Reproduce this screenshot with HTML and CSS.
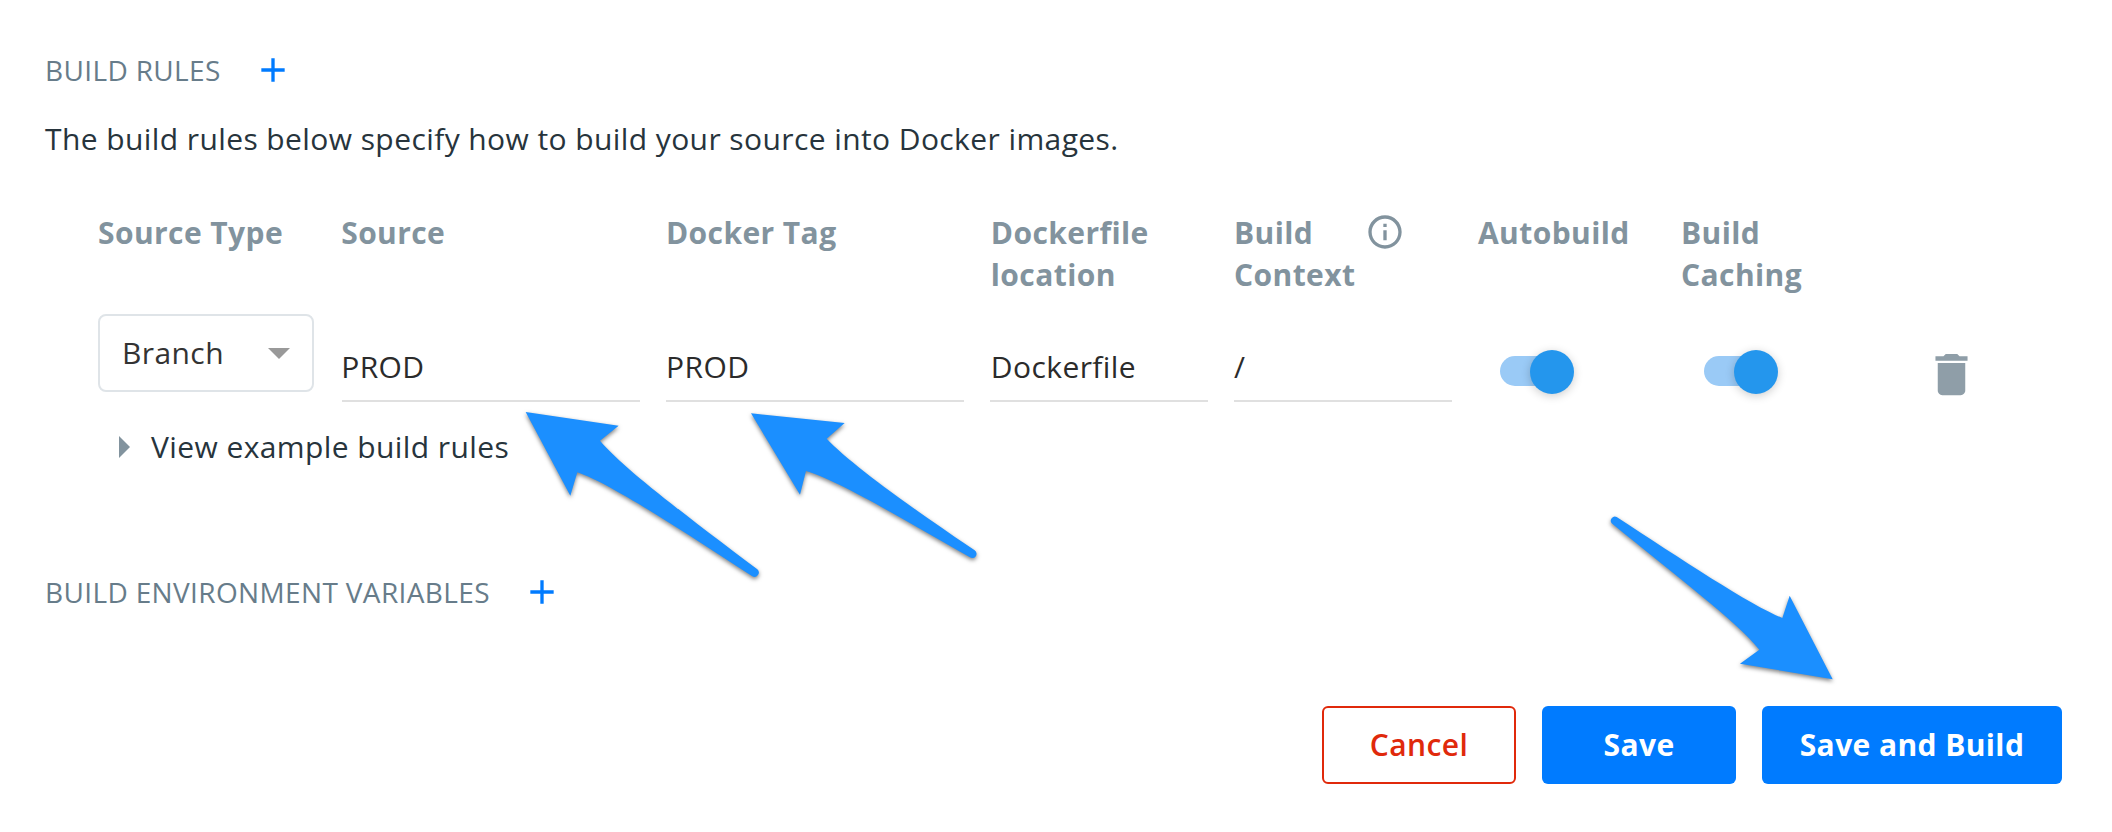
FILE: index.html
```html
<!DOCTYPE html>
<html lang="en">
<head>
<meta charset="utf-8">
<title>Build Rules</title>
<link rel="stylesheet" href="styles.css">
</head>
<body>
<main class="page">
  <header class="section-head">
    <h2 class="section-title">BUILD RULES</h2>
    <svg class="plus" viewBox="0 0 24 24"><path d="M19 13h-6v6h-2v-6H5v-2h6V5h2v6h6v2z"/></svg>
  </header>
  <p class="intro">The build rules below specify how to build your source into Docker images.</p>

  <section class="rules">
    <div class="row labels">
      <div>Source Type</div>
      <div>Source</div>
      <div>Docker Tag</div>
      <div>Dockerfile<br>location</div>
      <div class="with-info">
        <span>Build<br>Context</span>
        <svg class="info" viewBox="0 0 24 24"><path d="M11 7h2v2h-2zm0 4h2v6h-2zm1-9C6.48 2 2 6.48 2 12s4.48 10 10 10 10-4.48 10-10S17.52 2 12 2zm0 18c-4.41 0-8-3.59-8-8s3.59-8 8-8 8 3.59 8 8-3.59 8-8 8z"/></svg>
      </div>
      <div>Autobuild</div>
      <div>Build<br>Caching</div>
    </div>
    <div class="row values">
      <div class="select"><span>Branch</span><svg class="caret" viewBox="0 0 22 11"><path d="M0 0h22L11 11z"/></svg></div>
      <div class="field">PROD</div>
      <div class="field">PROD</div>
      <div class="field">Dockerfile</div>
      <div class="field">/</div>
      <div class="switch"><span class="thumb"></span></div>
      <div class="switch caching"><span class="thumb"></span></div>
      <svg class="trash" viewBox="0 0 24 24"><path d="M6 19c0 1.100.9 2 2 2h8c1.100 0 2-.9 2-2V7H6v12zM19 4h-3.500l-1-1h-5l-1 1H5v2h14V4z"/></svg>
    </div>
    <div class="example">
      <svg class="disclosure" viewBox="0 0 11 22"><path d="M0 0l11 11L0 22z"/></svg>
      <span>View example build rules</span>
    </div>
  </section>

  <header class="section-head env">
    <h2 class="section-title">BUILD ENVIRONMENT VARIABLES</h2>
    <svg class="plus" viewBox="0 0 24 24"><path d="M19 13h-6v6h-2v-6H5v-2h6V5h2v6h6v2z"/></svg>
  </header>

  <footer class="actions">
    <button class="btn cancel">Cancel</button>
    <button class="btn primary">Save</button>
    <button class="btn primary wide">Save and Build</button>
  </footer>

  <svg class="arrows" viewBox="0 0 2112 832">
    <g transform="translate(500 390) scale(.33333)">
      <path d="M77 66L356 107L300 152C370 235 560 378 772 538A13 13 0 0 1 757 559C560 430 330 280 232 247L211 317Z"/>
      <path d="M753 70L1034 99L980 146C1050 220 1220 343 1424 481A12.500 12.500 0 0 1 1410 502C1230 400 1020 273 918 243L900 314Z"/>
    </g>
    <g transform="translate(1580 490) scale(.33333)">
      <path d="M758 568L629 317L607 384C510 345 300 205 110 81A12.500 12.500 0 0 0 95 100C290 260 470 395 538 479L480 521Z"/>
    </g>
  </svg>
</main>
</body>
</html>
```
FILE: styles.css
```css
* { box-sizing: border-box; }

body {
  margin: 0;
  background: #fff;
  color: #27343c;
  font: 30px/42px "Open Sans", "Noto Sans", sans-serif;
  letter-spacing: .41px;
}

svg { display: block; }

.page {
  position: relative;
  width: 2112px;
  height: 832px;
  padding: 50px 50px 0 45px;
  overflow: hidden;
}

.section-head {
  display: flex;
  align-items: center;
  gap: 32px;
  height: 40px;
}

.section-title {
  margin: 0;
  color: #677c8a;
  font-size: 28px;
  font-weight: 400;
  letter-spacing: .36px;
  line-height: 40px;
}

.plus { width: 40px; height: 40px; fill: #007bff; }

.intro { margin: 28px 0 0; }

.rules { margin: 52px 0 0 53px; }

.row {
  display: grid;
  grid-template-columns: 218px 298px 298px 218px 218px 177px 217px 56px;
  column-gap: 26px;
}

.row > :nth-child(2) { text-indent: -.8px; }

.row > :nth-child(4) { padding-left: .8px; }

.labels {
  height: 102px;
  color: #82939e;
  font-weight: 700;
}

.with-info { display: flex; gap: 10px; }

.info { width: 40px; height: 40px; fill: #82939e; }

.values {
  height: 88px;
  color: #2b2b2b;
}

.select {
  display: flex;
  align-items: center;
  justify-content: space-between;
  width: 216px;
  height: 78px;
  padding: 0 22px;
  border: 2px solid #dfe4e8;
  border-radius: 8px;
  color: #333;
}

.caret { width: 22px; height: 11px; fill: #999; }

.field {
  height: 88px;
  padding-top: 32px;
  border-bottom: 2px solid #e0e0e0;
}

.switch {
  display: flex;
  align-items: center;
  justify-content: flex-end;
  width: 72px;
  height: 30px;
  margin: 42px 0 0 22px;
  border-radius: 15px;
  background: #9acaf6;
}

.caching { margin-left: 23px; }

.thumb {
  flex: none;
  width: 44px;
  height: 44px;
  margin: 2px -2px 0 0;
  border-radius: 50%;
  background: #2496ed;
  box-shadow: 0 2px 10px rgba(0, 0, 0, .2);
}

.trash { width: 55px; height: 55px; margin-top: 33px; fill: #8f9ea8; }

.example {
  display: flex;
  align-items: center;
  gap: 21px;
  height: 42px;
  margin: 24px 0 0 21px;
}

.disclosure { width: 11px; height: 22px; fill: #82939e; }

.env { margin-top: 104px; }

.actions {
  display: flex;
  justify-content: flex-end;
  gap: 26px;
  margin-top: 94px;
}

.btn {
  width: 194px;
  height: 78px;
  padding: 0;
  border: 0;
  border-radius: 6px;
  font: 600 30px/42px "Open Sans", "Noto Sans", sans-serif;
  letter-spacing: .4px;
}

.primary { background: #007bff; color: #fff; font-weight: 700; }

.cancel { border: 2px solid #e0290b; background: #fff; color: #e0290b; }

.wide { width: 300px; }

.arrows {
  position: absolute;
  top: 0;
  left: 0;
  width: 2112px;
  height: 832px;
  fill: #1b8fff;
  filter: drop-shadow(0 2px 2px rgba(0, 0, 0, .5));
  pointer-events: none;
}
```
